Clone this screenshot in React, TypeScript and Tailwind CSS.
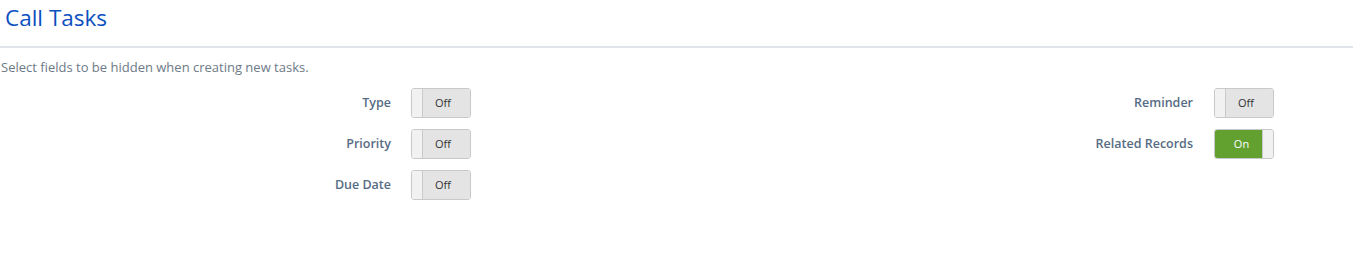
import React from "react";

function Toggle({ on }: { on: boolean }) {
  if (on) {
    return (
      <div className="flex h-[30px] w-[60px] overflow-hidden rounded-[3px] border border-[#c9c9c9]">
        <div className="flex flex-1 items-center justify-center bg-[#62a12f] pl-[6px] text-[11px] text-white">On</div>
        <div className="w-[11px] border-l border-[#c9c9c9] bg-[#f1f1f1]" />
      </div>
    );
  }
  return (
    <div className="flex h-[30px] w-[60px] overflow-hidden rounded-[3px] border border-[#c9c9c9]">
      <div className="w-[11px] border-r border-[#c9c9c9] bg-[#f1f1f1]" />
      <div className="flex flex-1 items-center justify-center bg-[#e4e4e4] pr-[7px] text-[11px] text-[#333]">Off</div>
    </div>
  );
}

function Row({ label, on, labelW, gap }: { label: string; on: boolean; labelW: string; gap: string }) {
  return (
    <div className="flex h-[30px] items-center">
      <div className={`${labelW} text-right text-[12.5px] font-semibold text-[#566c84]`}>{label}</div>
      <div className={gap}>
        <Toggle on={on} />
      </div>
    </div>
  );
}

export default function App() {
  return (
    <div className="h-[261px] w-[1353px] bg-white" style={{ fontFamily: "'Open Sans', 'Noto Sans', sans-serif" }}>
      <div className="h-[48px] border-b-2 border-[#e1e4e8] pl-[5px] pt-[3px]">
        <h1 className="text-[22.5px] leading-[30px] text-[#0c50c0]">Call Tasks</h1>
      </div>
      <p className="mt-[10px] pl-[1px] text-[13px] leading-[18px] text-[#6d7a88]">
        Select fields to be hidden when creating new tasks.
      </p>
      <div className="mt-[12px] flex">
        <div className="flex w-[676px] flex-col gap-[11px]">
          <Row label="Type" on={false} labelW="w-[391px]" gap="ml-[20px]" />
          <Row label="Priority" on={false} labelW="w-[391px]" gap="ml-[20px]" />
          <Row label="Due Date" on={false} labelW="w-[391px]" gap="ml-[20px]" />
        </div>
        <div className="flex flex-1 flex-col gap-[11px]">
          <Row label="Reminder" on={false} labelW="w-[517px]" gap="ml-[21px]" />
          <Row label="Related Records" on={true} labelW="w-[517px]" gap="ml-[21px]" />
        </div>
      </div>
    </div>
  );
}
